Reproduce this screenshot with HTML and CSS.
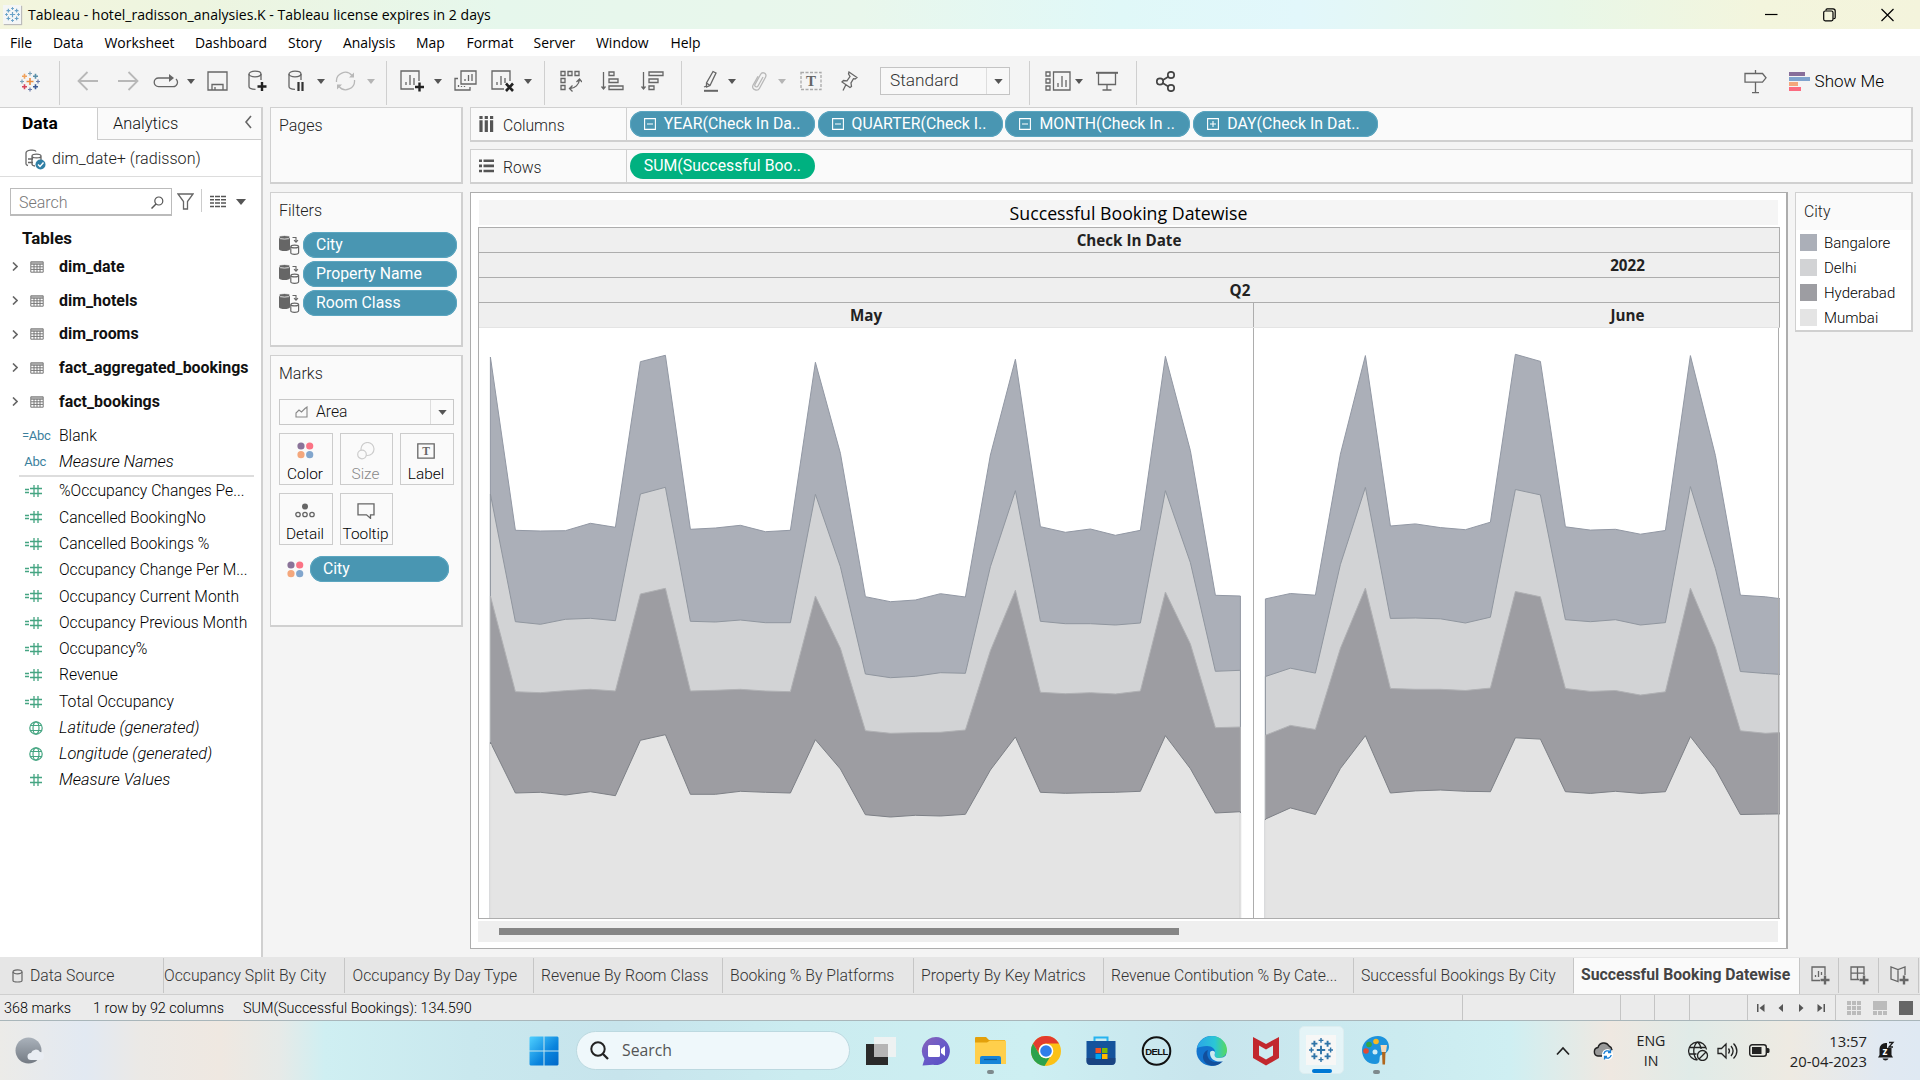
FILE: index.html
```html
<!DOCTYPE html>
<html lang="en">
<head>
<meta charset="utf-8">
<title>Tableau - hotel_radisson_analysies.K</title>
<link rel="stylesheet" href="styles.css">
</head>
<body>
<svg class="defs" width="0" height="0" aria-hidden="true">
  <symbol id="caret" viewBox="0 0 10 6"><path d="M0 0h10L5 6z"/></symbol>
  <symbol id="logo" viewBox="0 0 20 20">
    <g fill="none" stroke-width="1.6">
      <path class="c1" d="M10 6.5v7M6.5 10h7"/>
      <path class="c2" d="M4.5 2.2v5M2 4.7h5"/>
      <path class="c3" d="M15.5 2.2v5M13 4.7h5"/>
      <path class="c4" d="M4.5 12.8v5M2 15.3h5"/>
      <path class="c5" d="M15.5 12.8v5M13 15.3h5"/>
      <path class="c6" d="M10 0v4M8 2h4M2 8v4M0 10h4" stroke-width="1.2"/>
      <path class="c7" d="M10 16v4M8 18h4M18 8v4M16 10h4" stroke-width="1.2"/>
    </g>
  </symbol>
  <symbol id="table" viewBox="0 0 14 12"><path d="M.8.8h12.4v10.4H.8zM1 3.2h12M1 5.8h12M1 8.4h12M4 3v8M7 3v8M10 3v8M1 2h12" fill="none" stroke="#777" stroke-width="1"/></symbol>
  <symbol id="hash" viewBox="0 0 18 14"><path d="M0 5.5h4M0 8.5h4M5 4.5h12M5 9.5h12M9 1v12M13 1v12" fill="none" stroke="#45a582" stroke-width="1.3"/></symbol>
  <symbol id="hash1" viewBox="0 0 18 14"><path d="M5 4.5h12M5 9.5h12M9 1v12M13 1v12" fill="none" stroke="#45a582" stroke-width="1.3"/></symbol>
  <symbol id="globe" viewBox="0 0 14 14"><g fill="none" stroke="#45a582" stroke-width="1.2"><circle cx="7" cy="7" r="6.2"/><ellipse cx="7" cy="7" rx="3" ry="6.2"/><path d="M1.5 4.5h11M1.5 9.5h11"/></g></symbol>
  <symbol id="dbflow" viewBox="0 0 21 20">
    <path d="M0 2.2v12c0 2.4 11 2.4 11 0v-12z" fill="#666"/><ellipse cx="5.5" cy="2.3" rx="5.5" ry="1.8" fill="#666" stroke="#fafafa" stroke-width=".8"/>
    <path d="M11.8 11.8v6c0 2 7.8 2 7.8 0v-6" fill="#fafafa" stroke="#666" stroke-width="1.2"/><ellipse cx="15.7" cy="11.5" rx="3.9" ry="1.4" fill="#fafafa" stroke="#666" stroke-width="1.2"/>
    <path d="M13.5 2.5h3.5v4.5M15 5.2l2 2 2-2" fill="none" stroke="#666" stroke-width="1.1"/>
  </symbol>
  <symbol id="dots" viewBox="0 0 17 17"><circle cx="4" cy="4" r="3.6" fill="#8a7399"/><circle cx="12.7" cy="4" r="3.6" fill="#fb7385"/><circle cx="4" cy="12.7" r="3.6" fill="#f4a77c"/><circle cx="12.7" cy="12.7" r="3.6" fill="#82a6cd"/></symbol>
  <symbol id="minus" viewBox="0 0 12 12"><path d="M.6.6h10.8v10.8H.6zM3 6h6" fill="none" stroke="#fff" stroke-width="1.1"/></symbol>
  <symbol id="plus" viewBox="0 0 12 12"><path d="M.6.6h10.8v10.8H.6zM3 6h6M6 3v6" fill="none" stroke="#fff" stroke-width="1.1"/></symbol>
</svg>

<header class="titlebar">
  <span class="app-icon"><svg class="mono light" width="15" height="17"><use href="#logo"/></svg></span>
  <span class="title">Tableau - hotel_radisson_analysies.K - Tableau license expires in 2 days</span>
  <div class="window-buttons">
    <svg width="13" height="14" viewBox="0 0 13 14"><path d="M0 6.500h12.500" stroke="#000" stroke-width="1.2"/></svg>
    <svg width="13" height="14" viewBox="0 0 13 14"><path d="M3 2.600V2a1.200 1.200 0 0 1 1.200-1.200H10A2.200 2.200 0 0 1 12.200 3V9.500A1.200 1.200 0 0 1 11 10.700h-.6" fill="none" stroke="#000" stroke-width="1.2"/><rect x=".7" y="3" width="9.300" height="9.800" rx="1.500" fill="none" stroke="#000" stroke-width="1.2"/></svg>
    <svg width="13" height="14" viewBox="0 0 13 14"><path d="M.5 1l12 12M12.500 1l-12 12" stroke="#000" stroke-width="1.2"/></svg>
  </div>
</header>

<nav class="menubar"><span>File</span><span>Data</span><span>Worksheet</span><span>Dashboard</span><span>Story</span><span>Analysis</span><span>Map</span><span>Format</span><span>Server</span><span>Window</span><span>Help</span></nav>

<div class="toolbar">
  <div class="tools tools-home"><svg width="20" height="21"><use href="#logo"/></svg></div>
  <div class="tools tools-file">
    <svg width="22" height="20" viewBox="0 0 22 20" class="ln dim"><path d="M21 10H1.500M10.500 1L1.500 10l9 9" stroke-width="1.800"/></svg>
    <svg width="22" height="20" viewBox="0 0 22 20" class="ln dim"><path d="M1 10h19.500M11.500 1l9 9-9 9" stroke-width="1.800"/></svg>
    <svg width="26" height="16" viewBox="0 0 26 16" class="ln"><path d="M19 5H5.500a4.300 4.300 0 0 0 0 8.600h14.500a4.300 4.300 0 0 0 3-7.500"/><path d="M16 1l5 4-5 4z" fill="#666" stroke="none"/></svg>
    <svg width="8" height="5" class="caret"><use href="#caret"/></svg>
    <svg width="21" height="20" viewBox="0 0 21 20" class="ln"><path d="M1 1h19v18H1zM5 19v-5.500h11V19M8 19v-3"/></svg>
    <svg width="20" height="22" viewBox="0 0 20 22" class="ln"><ellipse cx="7" cy="4" rx="6" ry="2.800"/><path d="M1 4v12.500c0 1.800 3 2.800 6.500 2.800M13 4v6"/><path d="M14 12v9M9.500 16.500h9" stroke="#222" stroke-width="2.400"/></svg>
    <svg width="18" height="22" viewBox="0 0 18 22" class="ln"><ellipse cx="7" cy="4" rx="6" ry="2.800"/><path d="M1 4v12.500c0 1.800 2.500 2.800 6 2.800M13 4v6"/><path d="M10.500 12v9M14.500 12v9" stroke="#333" stroke-width="2.200"/></svg>
    <svg width="8" height="5" class="caret"><use href="#caret"/></svg>
    <svg width="21" height="20" viewBox="0 0 21 20" class="ln dim"><path d="M1.500 11a8.800 8.800 0 0 1 15.500-6.500M19.500 9a8.800 8.800 0 0 1-15.500 6.500"/><path d="M14 6.500h5V1.500zM7 13.500H2v5z" fill="#b8b8b8" stroke="none"/></svg>
    <svg width="8" height="5" class="caret dimmed"><use href="#caret"/></svg>
  </div>
  <div class="tools tools-sheet">
    <svg width="25" height="22" viewBox="0 0 25 22" class="ln"><path d="M19 11V1H1v18h13M6 15v-3M10 15V5M14 15V8"/><path d="M19.500 12.500v9M15 17h9" stroke="#222" stroke-width="2.400"/></svg>
    <svg width="8" height="5" class="caret"><use href="#caret"/></svg>
    <svg width="23" height="22" viewBox="0 0 23 22" class="ln"><path d="M7 1h15v13H7zM11 11V9M14.500 11V5M18 11V4M4 8.500H1V20h15v-3M4.500 17v-2M7.500 17v-1M10.500 17v-1"/></svg>
    <svg width="24" height="22" viewBox="0 0 24 22" class="ln"><path d="M19 11V1H1v18h12M6 15v-3M10 15V6M14 13V8"/><path d="M15 13.500l7 7.500M22 13.500l-7 7.500" stroke="#222" stroke-width="2.600"/></svg>
    <svg width="8" height="5" class="caret"><use href="#caret"/></svg>
  </div>
  <div class="tools tools-sort">
    <svg width="22" height="22" viewBox="0 0 22 22" class="ln"><path d="M1 1.500h4v4H1zM8 1.500h4v4H8zM15 1.500h4v4h-4zM1 8.500h4v4H1zM1 15.500h4v4H1zM10 18.500c5 0 9-4 9.500-9M12.500 15.500l-3 3 3 3M16.500 12l3-3 2.500 3"/></svg>
    <svg width="23" height="20" viewBox="0 0 23 20" class="ln"><path d="M2.500 1v17M.5 15.500l2 2.500 2-2.500M8 1h5v3.500H8zM8 8h9v3.500H8zM8 15h14v3.500H8z"/></svg>
    <svg width="23" height="20" viewBox="0 0 23 20" class="ln"><path d="M2.500 1v17M.5 15.500l2 2.500 2-2.500M8 1h14v3.500H8zM8 8h9v3.500H8zM8 15h5v3.500H8z"/></svg>
  </div>
  <div class="tools tools-format">
    <svg width="16" height="22" viewBox="0 0 16 22" class="ln"><path d="M10 1.500l3 1.500-6 12.500-3.500 1.500v-4zM3.500 13l3.500 2.500M1 17l2.500-1"/><path d="M1 20.800h14" stroke-width="2"/></svg>
    <svg width="8" height="5" class="caret"><use href="#caret"/></svg>
    <svg width="17" height="21" viewBox="0 0 17 21" class="ln dim"><path d="M12 6l-5 9c-1 2-4 .5-3-1.500l5.500-10c2-3.500 7-1 5 2.700l-6 11c-2 4-8.500 1-6.500-3l5-9"/></svg>
    <svg width="8" height="5" class="caret dimmed"><use href="#caret"/></svg>
    <svg width="22" height="20" viewBox="0 0 22 20" class="ln"><path d="M1 1.500h20v17H1z" stroke="#aaa" stroke-dasharray="3 1.500"/><text x="11" y="15" class="glyph-t">T</text></svg>
    <svg width="17" height="21" viewBox="0 0 17 21" class="ln"><path d="M8 1l8 5.500-2 1.500-1.500-.3-2.500 4.300.5 3.500-1.500 1L1 11l1.500-1.500 3.500.3L9 5.500 7.500 3zM5 13.500L2 19.500"/></svg>
    <div class="fit-select"><span>Standard</span><i><svg width="9" height="5" class="caret"><use href="#caret"/></svg></i></div>
  </div>
  <div class="tools tools-view">
    <svg width="26" height="20" viewBox="0 0 26 20" class="ln"><path d="M1 1h4v4H1zM1 8h4v4H1zM1 15h4v4H1zM8.500 1H25v18H8.500zM13 16v-4M17 16V5M21 16V9"/></svg>
    <svg width="8" height="5" class="caret"><use href="#caret"/></svg>
    <svg width="22" height="20" viewBox="0 0 22 20" class="ln"><path d="M0 1.800h22" stroke-width="2"/><path d="M2.500 2v11.500h17V2M11 13.500V19M6.500 19h9"/></svg>
  </div>
  <div class="tools tools-share">
    <svg width="20" height="21" viewBox="0 0 20 21" class="ln dark"><circle cx="4" cy="10.500" r="3.200"/><circle cx="15" cy="4" r="3.200"/><circle cx="15" cy="17" r="3.200"/><path d="M7 9l5.300-3.300M7 12.200l5.300 3.300"/></svg>
  </div>
  <div class="show-me">
    <svg width="23" height="24" viewBox="0 0 23 24" class="ln"><path d="M1 3.500h17.500l3.500 4.300-3.500 4.300H1zM11.500 0v3.500M11.500 12v10.500M8 22.700h7"/></svg>
    <svg width="21" height="20" viewBox="0 0 21 20"><path fill="#876e9a" d="M0 0h16v4H0z"/><path fill="#7fa3cd" d="M0 5h21v4H0z"/><path fill="#f4a77c" d="M0 10h9v4H0z"/><path fill="#fb6b80" d="M0 15h12v4H0z"/></svg>
    <span>Show Me</span>
  </div>
</div>

<main class="workspace">
  <aside class="data-pane">
    <div class="pane-tabs"><b>Data</b><span>Analytics<svg width="9" height="14" viewBox="0 0 9 14"><path d="M7 1L2 7l5 6" fill="none" stroke="#666" stroke-width="1.600"/></svg></span></div>
    <div class="source"><svg width="21" height="21" viewBox="0 0 21 21" class="ln"><path d="M3 16.500c-1.500-.3-2-1-2-1.500V4c0-3 9-4 10-1.500M7 7c0-2.500 9-2.500 9 0s-9 2.500-9 0v8c0 1 1 1.800 3 2M16 7v4M3 10h5M3 13.500h5"/><circle cx="15.500" cy="15.500" r="5" fill="#2f7fa5" stroke="none"/><path d="M13 15.500l2 2 3.500-4" stroke="#fff" stroke-width="1.400"/></svg><span>dim_date+ (radisson)</span></div>
    <div class="searchbar">
      <div class="search">Search<svg width="13" height="13" viewBox="0 0 13 13"><circle cx="7.800" cy="5" r="4" fill="none" stroke="#555" stroke-width="1.200"/><path d="M5 8l-4.500 4.500" stroke="#555" stroke-width="1.500"/></svg></div>
      <svg width="17" height="17" viewBox="0 0 17 17" class="ln"><path d="M1 1h15l-5.500 7.500V16H6.500V8.500z"/></svg>
      <i class="sep"></i>
      <svg width="16" height="13" viewBox="0 0 16 13"><path d="M0 1.500h16M0 4.800h16M0 8.100h16M0 11.400h16" stroke="#555" stroke-width="1.500" stroke-dasharray="4 1 5 1 5 0"/></svg>
      <svg width="10" height="6" class="caret"><use href="#caret"/></svg>
    </div>
    <h2>Tables</h2>
    <ul class="tables">
      <li><svg width="6" height="9" viewBox="0 0 6 9"><path d="M1 .5l4 4-4 4" class="chev"/></svg><svg width="14" height="12"><use href="#table"/></svg>dim_date</li>
      <li><svg width="6" height="9" viewBox="0 0 6 9"><path d="M1 .5l4 4-4 4" class="chev"/></svg><svg width="14" height="12"><use href="#table"/></svg>dim_hotels</li>
      <li><svg width="6" height="9" viewBox="0 0 6 9"><path d="M1 .5l4 4-4 4" class="chev"/></svg><svg width="14" height="12"><use href="#table"/></svg>dim_rooms</li>
      <li><svg width="6" height="9" viewBox="0 0 6 9"><path d="M1 .5l4 4-4 4" class="chev"/></svg><svg width="14" height="12"><use href="#table"/></svg>fact_aggregated_bookings</li>
      <li><svg width="6" height="9" viewBox="0 0 6 9"><path d="M1 .5l4 4-4 4" class="chev"/></svg><svg width="14" height="12"><use href="#table"/></svg>fact_bookings</li>
    </ul>
    <ul class="fields dims">
      <li><span class="abc">=Abc</span>Blank</li>
      <li><span class="abc">Abc</span><em>Measure Names</em></li>
    </ul>
    <ul class="fields measures">
      <li><svg width="18" height="14"><use href="#hash"/></svg>%Occupancy Changes Pe...</li>
      <li><svg width="18" height="14"><use href="#hash"/></svg>Cancelled BookingNo</li>
      <li><svg width="18" height="14"><use href="#hash"/></svg>Cancelled Bookings %</li>
      <li><svg width="18" height="14"><use href="#hash"/></svg>Occupancy Change Per M...</li>
      <li><svg width="18" height="14"><use href="#hash"/></svg>Occupancy Current Month</li>
      <li><svg width="18" height="14"><use href="#hash"/></svg>Occupancy Previous Month</li>
      <li><svg width="18" height="14"><use href="#hash"/></svg>Occupancy%</li>
      <li><svg width="18" height="14"><use href="#hash"/></svg>Revenue</li>
      <li><svg width="18" height="14"><use href="#hash"/></svg>Total Occupancy</li>
      <li><svg width="14" height="14"><use href="#globe"/></svg><em>Latitude (generated)</em></li>
      <li><svg width="14" height="14"><use href="#globe"/></svg><em>Longitude (generated)</em></li>
      <li><svg width="18" height="14"><use href="#hash1"/></svg><em>Measure Values</em></li>
    </ul>
  </aside>

  <section class="cards">
    <div class="card pages"><h3>Pages</h3></div>
    <div class="card filters"><h3>Filters</h3>
      <div class="filter"><svg width="21" height="20"><use href="#dbflow"/></svg><span class="pill">City</span></div>
      <div class="filter"><svg width="21" height="20"><use href="#dbflow"/></svg><span class="pill">Property Name</span></div>
      <div class="filter"><svg width="21" height="20"><use href="#dbflow"/></svg><span class="pill">Room Class</span></div>
    </div>
    <div class="card marks"><h3>Marks</h3>
      <div class="mark-type"><svg width="13" height="12" viewBox="0 0 13 12"><path d="M1 11V7l3-3 2.500 2L10 2.500l2-1.500v10z" fill="none" stroke="#888" stroke-width="1.100"/></svg><span>Area</span><i><svg width="9" height="5" class="caret"><use href="#caret"/></svg></i></div>
      <div class="shelf-buttons">
        <div><svg width="17" height="17"><use href="#dots"/></svg>Color</div>
        <div class="off"><svg width="18" height="18" viewBox="0 0 18 18"><g fill="none" stroke="#ccc" stroke-width="1.200"><circle cx="10.500" cy="7" r="6.500"/><circle cx="5" cy="12.500" r="4.300" fill="#fafafa"/></g></svg>Size</div>
        <div><svg width="18" height="16" viewBox="0 0 18 16" class="ln"><path d="M.8.8h16.400v14.400H.8z"/><text x="9" y="12" class="glyph-t small">T</text></svg>Label</div>
        <div><svg width="20" height="16" viewBox="0 0 20 16" class="ln"><circle cx="10" cy="3.500" r="3" fill="#666" stroke="none"/><circle cx="3" cy="11.500" r="2.200"/><circle cx="10" cy="11.500" r="2.200"/><circle cx="17" cy="11.500" r="2.200"/></svg>Detail</div>
        <div><svg width="18" height="16" viewBox="0 0 18 16" class="ln"><path d="M1 .8h16v11h-3.500v3.500L9.500 11.800H1z"/></svg>Tooltip</div>
      </div>
      <div class="encoding"><svg width="17" height="17"><use href="#dots"/></svg><span class="pill">City</span></div>
    </div>
  </section>

  <section class="canvas">
    <div class="shelf columns">
      <div class="shelf-name"><svg width="15" height="16" viewBox="0 0 15 16"><path d="M2 0v3M7.300 0v3M12.600 0v3M2 4.200V16M7.300 4.200V16M12.600 4.200V16" stroke="#555" stroke-width="3.200"/></svg><span>Columns</span></div>
      <span class="pill"><svg width="12" height="12"><use href="#minus"/></svg>YEAR(Check In Da..</span>
      <span class="pill"><svg width="12" height="12"><use href="#minus"/></svg>QUARTER(Check I..</span>
      <span class="pill"><svg width="12" height="12"><use href="#minus"/></svg>MONTH(Check In ..</span>
      <span class="pill"><svg width="12" height="12"><use href="#plus"/></svg>DAY(Check In Dat..</span>
    </div>
    <div class="shelf rows">
      <div class="shelf-name"><svg width="15" height="14" viewBox="0 0 15 14"><path d="M0 1.800h3M0 6.900h3M0 12h3M4.500 1.800H15M4.500 6.900H15M4.500 12H15" stroke="#555" stroke-width="2.600"/></svg><span>Rows</span></div>
      <span class="pill green">SUM(Successful Boo..</span>
    </div>
    <div class="view-row">
      <div class="sheet">
        <h1>Successful Booking Datewise</h1>
        <div class="viz">
          <div class="head">Check In Date</div>
          <div class="head year"><span>2022</span></div>
          <div class="head quarter"><span>Q2</span></div>
          <div class="head months"><span>May</span><span>June</span></div>
          <svg class="plot" width="1301" height="590" viewBox="479 328 1301 590">
            <g class="bangalore">
              <path d="M490.400 919V357L515.400 530.300 540.400 531 565.400 530.700 590.400 523.300 615.400 527.300 640.400 361.700 665.400 355.300 690.400 529.300 715.400 528 740.400 525.300 765.400 531.700 790.400 530.300 815.400 362.300 840.400 453.300 865.400 596.700 890.400 601.700 915.400 600 940.400 593.700 965.400 597 990.400 455 1015.400 359.300 1040.400 526.700 1065.400 532.300 1090.400 529 1115.400 535.300 1140.400 530.300 1165.400 356.300 1190.400 450.700 1215.400 595.300 1240.400 596V919z"/>
              <path d="M1265.400 919V598.900L1290.400 593.500 1315.400 595.200 1340.400 454.200 1365.400 355.600 1390.400 526 1415.400 523.900 1440.400 527.600 1465.400 529.700 1490.400 522.200 1515.400 354.300 1540.400 361.400 1565.400 526.800 1590.400 530.100 1615.400 529.300 1640.400 534.200 1665.400 530.500 1690.400 355.600 1715.400 455.500 1740.400 595.200 1765.400 596.800 1790.400 600V919z"/>
            </g>
            <g class="delhi">
              <path d="M490.400 919V494L515.400 621.700 540.400 624.300 565.400 619.300 590.400 618.300 615.400 620.700 640.400 494 665.400 487.300 690.400 621.300 715.400 622 740.400 620 765.400 622.700 790.400 622.700 815.400 494.300 840.400 566.700 865.400 674 890.400 677.700 915.400 676.300 940.400 672.700 965.400 673.300 990.400 566.700 1015.400 490.700 1040.400 621.300 1065.400 623.700 1090.400 623.700 1115.400 625 1140.400 623 1165.400 490.700 1190.400 562.700 1215.400 671.300 1240.400 670.300V919z"/>
              <path d="M1265.400 919V676.500L1290.400 668.200 1315.400 673.100 1340.400 564.500 1365.400 487.400 1390.400 618.400 1415.400 618 1440.400 618.800 1465.400 623 1490.400 617.200 1515.400 489.500 1540.400 494.900 1565.400 619.700 1590.400 621.700 1615.400 619.700 1640.400 625 1665.400 622.600 1690.400 486.600 1715.400 568.700 1740.400 671.500 1765.400 673.500 1790.400 675V919z"/>
            </g>
            <g class="hyderabad">
              <path d="M490.400 919V596L515.400 691.700 540.400 692.700 565.400 690.700 590.400 689.300 615.400 691 640.400 594 665.400 588.300 690.400 691 715.400 690.300 740.400 689.300 765.400 691 790.400 691.700 815.400 596 840.400 648.300 865.400 730.700 890.400 733.300 915.400 732.700 940.400 732.300 965.400 730 990.400 650.700 1015.400 590.300 1040.400 692.300 1065.400 693.700 1090.400 692.700 1115.400 694 1140.400 691 1165.400 592 1190.400 644 1215.400 727.700 1240.400 727V919z"/>
              <path d="M1265.400 919V735.300L1290.400 725.400 1315.400 729.500 1340.400 648.300 1365.400 588.100 1390.400 688.500 1415.400 689.300 1440.400 689.300 1465.400 690.500 1490.400 688.100 1515.400 591.500 1540.400 596.800 1565.400 688.500 1590.400 691.400 1615.400 690.500 1640.400 695.100 1665.400 691.800 1690.400 588.100 1715.400 647.400 1740.400 730.800 1765.400 733.300 1790.400 732V919z"/>
            </g>
            <g class="mumbai">
              <path d="M490.400 919V742.300L515.400 793 540.400 792.300 565.400 795 590.400 791.700 615.400 795.700 640.400 740.300 665.400 734.700 690.400 794.300 715.400 794.300 740.400 791.300 765.400 792.300 790.400 793 815.400 739.700 840.400 769 865.400 814.700 890.400 817 915.400 815.300 940.400 816 965.400 814.300 990.400 770 1015.400 737 1040.400 792.300 1065.400 793.300 1090.400 792.700 1115.400 792.300 1140.400 791.300 1165.400 735.700 1190.400 768.700 1215.400 813 1240.400 811.700V919z"/>
              <path d="M1265.400 919V819.100L1290.400 807.900 1315.400 814.500 1340.400 768.500 1365.400 735.700 1390.400 793 1415.400 790.900 1440.400 790 1465.400 791.300 1490.400 791.700 1515.400 737.800 1540.400 739.100 1565.400 791.700 1590.400 793.400 1615.400 791.300 1640.400 793.400 1665.400 791.700 1690.400 736.600 1715.400 768.900 1740.400 814.500 1765.400 814.100 1790.400 813.700V919z"/>
              <path class="edge" d="M490.500 744V919M1240.500 813V919M1265.500 820V919"/>
            </g>
            <path d="M1253.500 328v591M1778.500 328v591" stroke="#adadad"/>
          </svg>
        </div>
        <div class="scroll-track"><div class="scroll-thumb"></div></div>
      </div>
      <div class="legend">
        <h3>City</h3>
        <ul><li class="bangalore-key"><i></i>Bangalore</li><li class="delhi-key"><i></i>Delhi</li><li class="hyderabad-key"><i></i>Hyderabad</li><li class="mumbai-key"><i></i>Mumbai</li></ul>
      </div>
    </div>
  </section>
</main>

<nav class="sheet-tabs">
  <span class="ds"><svg width="11" height="14" viewBox="0 0 11 14"><path d="M1 3v8.500c0 2 9 2 9 0V3" fill="none" stroke="#666" stroke-width="1.200"/><ellipse cx="5.500" cy="2.800" rx="4.500" ry="2" fill="none" stroke="#666" stroke-width="1.200"/></svg>Data Source</span>
  <span class="cut">Occupancy Split By City</span>
  <span>Occupancy By Day Type</span>
  <span>Revenue By Room Class</span>
  <span>Booking % By Platforms</span>
  <span>Property By Key Matrics</span>
  <span>Revenue Contibution % By Cate...</span>
  <span>Successful Bookings By City</span>
  <span class="active">Successful Booking Datewise</span>
  <span class="new"><svg width="19" height="19" viewBox="0 0 19 19" class="ln"><path d="M14 9V1H1v13.500h8M4.500 11V9M7.500 11V5M10.500 9V6"/><path d="M14 9.500v9M9.500 14h9" stroke-width="2.400"/></svg></span>
  <span class="new"><svg width="19" height="19" viewBox="0 0 19 19" class="ln"><path d="M14 9V1H1v12.500h8M7.500 1v12.500M1 7.200h13"/><path d="M14 9.500v9M9.500 14h9" stroke-width="2.400"/></svg></span>
  <span class="new"><svg width="19" height="19" viewBox="0 0 19 19" class="ln"><path d="M15 9V1l-7 2.500L1 1v12l7 2.500V3.500"/><path d="M14 9.500v9M9.500 14h9" stroke-width="2.400"/></svg></span>
</nav>

<footer class="status">
  <span>368 marks</span><span>1 row by 92 columns</span><span>SUM(Successful Bookings): 134.590</span>
  <i class="cell"></i><i class="cell"></i><i class="cell"></i><i class="cell"></i>
  <div class="cell pager">
    <svg width="8" height="8" viewBox="0 0 8 8"><path d="M0 0h1.500v8H0zM7.500 0v8L2.500 4z"/></svg>
    <svg width="8" height="8" viewBox="0 0 8 8"><path d="M6 0v8L1.500 4z"/></svg>
    <svg width="8" height="8" viewBox="0 0 8 8"><path d="M2 0v8L6.500 4z"/></svg>
    <svg width="8" height="8" viewBox="0 0 8 8"><path d="M8 0H6.500v8H8zM.5 0v8l5-4z"/></svg>
  </div>
  <div class="cell layouts">
    <svg width="14" height="14" viewBox="0 0 14 14"><path fill="#bbb" d="M0 0h4v4H0zM5 0h4v4H5zM10 0h4v4h-4zM0 5h4v4H0zM5 5h4v4H5zM10 5h4v4h-4zM0 10h4v4H0zM5 10h4v4H5zM10 10h4v4h-4z"/></svg>
    <svg width="14" height="14" viewBox="0 0 14 14"><path fill="#bbb" d="M0 0h14v9H0zM0 10h4v4H0zM5 10h4v4H5zM10 10h4v4h-4z"/></svg>
    <svg width="14" height="14" viewBox="0 0 14 14"><path fill="#666" d="M0 0h14v14H0z"/></svg>
  </div>
</footer>

<footer class="taskbar">
  <svg class="weather" width="30" height="28" viewBox="0 0 30 28"><defs><linearGradient id="gw" x2="0" y2="1"><stop stop-color="#aab2bb"/><stop offset="1" stop-color="#747b84"/></linearGradient></defs><circle cx="13.500" cy="13.500" r="13" fill="url(#gw)"/><path d="M16 23a3.500 3.500 0 0 1 0-7 5 5 0 0 1 9-1 4 4 0 0 1 0 8z" fill="#e9edf3"/></svg>
  <svg class="start" width="30" height="30" viewBox="0 0 30 30"><defs><linearGradient id="gs" x2="1" y2="1"><stop stop-color="#4fd0ff"/><stop offset=".6" stop-color="#0a84dd"/><stop offset="1" stop-color="#0067c8"/></linearGradient></defs><path fill="url(#gs)" d="M1.500.5h13v14H.5v-13zM15.500.5h13l1 1v13h-14zM.5 15.500h14v14h-13l-1-1zM15.500 15.500h14v13l-1 1h-13z"/></svg>
  <div class="tb-search"><svg width="19" height="19" viewBox="0 0 19 19"><circle cx="8" cy="8" r="6.700" fill="none" stroke="#222" stroke-width="2"/><path d="M13 13l5 5" stroke="#222" stroke-width="2.300"/></svg>Search</div>
  <div class="apps">
    <div><svg width="30" height="30" viewBox="0 0 30 30"><path d="M0 8h22v21H0z" fill="#2a2a2a"/><path d="M8 1h22v20H8z" fill="#f2f2f2" fill-opacity=".9"/><path d="M8 8h14v13H8z" fill="#b5b5b5"/></svg></div>
    <div><svg width="30" height="30" viewBox="0 0 30 30"><defs><linearGradient id="gc" x2=".8" y2="1"><stop stop-color="#8b63b8"/><stop offset=".5" stop-color="#6a5bc8"/><stop offset="1" stop-color="#5a50c4"/></linearGradient></defs><path d="M15 1a14 14 0 1 1-3 27.700L1.500 29.500 3.500 23A14 14 0 0 1 15 1z" fill="url(#gc)"/><rect x="7" y="9" width="12" height="12" rx="1.500" fill="#fff"/><path d="M20 13l4-3v10l-4-3z" fill="#fff"/></svg></div>
    <div class="run"><svg width="31" height="30" viewBox="0 0 31 30"><path d="M0 2a1 1 0 0 1 1-1h10l3 3h16v8H0z" fill="#e3a00b"/><path d="M0 6.500h12l3-2h15a1 1 0 0 1 1 1V28H0z" fill="#ffcf4b"/><path d="M5 28v-6a2 2 0 0 1 2-2h17a2 2 0 0 1 2 2v6z" fill="#1684d8"/><path d="M9 23.500h13" stroke="#0b5a9d" stroke-width="1.200"/></svg></div>
    <div><svg width="30" height="30" viewBox="0 0 30 30"><circle cx="15" cy="15" r="15" fill="#fbc116"/><path d="M2 7.500A15 15 0 0 1 28 7.500H15a7.500 7.500 0 0 0-6.500 11z" fill="#e33b2e"/><path d="M2 7.500l6.500 11A7.500 7.500 0 0 0 19 21L13.500 30A15 15 0 0 1 2 7.500z" fill="#2ba24c"/><circle cx="15" cy="15" r="7.300" fill="#fff"/><circle cx="15" cy="15" r="5.800" fill="#2f7de9"/></svg></div>
    <div><svg width="30" height="30" viewBox="0 0 30 30"><path d="M8.500 6V1.500h13V6" fill="none" stroke="#27b4f0" stroke-width="2"/><path d="M.5 5h29v20a4 4 0 0 1-4 4h-21a4 4 0 0 1-4-4z" fill="#14539c"/><path d="M.5 22h29v3a4 4 0 0 1-4 4h-21a4 4 0 0 1-4-4z" fill="#1c3f78" opacity=".7"/><path fill="#f25022" d="M9.500 12H15v5H9.500z"/><path fill="#7fba00" d="M16 12h5.500v5H16z"/><path fill="#00a4ef" d="M9.500 18H15v5H9.500z"/><path fill="#ffb900" d="M16 18h5.500v5H16z"/></svg></div>
    <div><svg width="31" height="30" viewBox="0 0 31 30"><circle cx="15.500" cy="15" r="13.800" fill="none" stroke="#111" stroke-width="2"/><text x="15.500" y="18.500" class="dell">DELL</text></svg></div>
    <div><svg width="31" height="30" viewBox="0 0 31 30"><defs><linearGradient id="ge" x2="1"><stop stop-color="#2ba5e8"/><stop offset=".6" stop-color="#2bc6d6"/><stop offset="1" stop-color="#58d95c"/></linearGradient></defs><circle cx="15.500" cy="15" r="15" fill="#1374ce"/><path d="M1 12C3 4 9 0 16 0c9 0 15 7 15 14 0 5-4 8-8 8-5 0-5-2-4-4 1-5-3-8-8-8-4 0-8 1-10 2z" fill="url(#ge)"/><path d="M12 14c-3 7 3 15 15 11-4 5-11 6-16 3-6-4-5-12 1-14z" fill="#124f9c"/><path d="M14 17c0-3 5-3 5 0-1 3 0 5 4 5 3 0 6-1 8-4v4l-3 3c-7 2-14-1-14-8z" fill="#cdeaf0"/></svg></div>
    <div><svg width="28" height="30" viewBox="0 0 28 30"><path d="M1 1l13 7 13-7v21l-13 7.500L1 22z" fill="#c2272d"/><path d="M7 9.500l7 4 7-4v10l-7 4-7-4z" fill="#cdebf0"/></svg></div>
    <div class="run focus"><svg width="30" height="30" viewBox="0 0 30 30" class="mono"><path d="M0 0h30v30H0z" fill="#f7f7f6"/><use href="#logo" x="3" y="3" width="24" height="24"/></svg></div>
    <div class="run"><svg width="30" height="31" viewBox="0 0 30 31"><path d="M17 1c7 0 11 5 11 11 0 7-8 7-9 9-1 3 1 8-5 8-8 0-13-6-13-14C1 7 9 1 17 1z" fill="#1d93dc"/><circle cx="15" cy="6.500" r="2.800" fill="#f5b921"/><circle cx="8" cy="9.500" r="2.800" fill="#35a544"/><circle cx="5" cy="16" r="2.800" fill="#e24a32"/><circle cx="14" cy="17" r="2.500" fill="#cdebf5"/><path d="M19.500 10h6.500l-1 7h-4.500z" fill="#f4d9b8"/><path d="M21 17h3.500l-.5 12.500h-2.500z" fill="#b0671d"/></svg></div>
  </div>
  <div class="tray">
    <svg width="14" height="10" viewBox="0 0 14 10"><path d="M1 8.500l6-6.500 6 6.500" fill="none" stroke="#222" stroke-width="1.700"/></svg>
    <svg width="21" height="18" viewBox="0 0 21 18"><path d="M9 14H5a4.300 4.300 0 0 1 0-8.500 6 6 0 0 1 11-1.500 5 5 0 0 1 3 6z" fill="#999"/><path d="M9 14H5a4.300 4.300 0 0 1 0-8.500 6 6 0 0 1 11-1.500 5 5 0 0 1 3 4" fill="none" stroke="#222" stroke-width="1.400"/><circle cx="14.500" cy="12.500" r="5.500" fill="#fff"/><path d="M10.800 12a3.800 3.800 0 0 1 6.500-2M18.200 13a3.800 3.800 0 0 1-6.500 2M17.500 7.500v3H15M11.500 17.500v-3H14" fill="none" stroke="#1a7fd4" stroke-width="1.300"/></svg>
    <span class="lang">ENG<br>IN</span>
    <svg width="21" height="20" viewBox="0 0 21 20"><g fill="none" stroke="#222" stroke-width="1.300"><path d="M18.500 8.500A9 9 0 1 0 9.500 19M1.500 6.500h16M1.500 13h7M9.500 1c-5 4-5 14 0 18M9.500 1c2 1.500 3.300 4 3.600 7"/><circle cx="14.500" cy="14.500" r="5"/><path d="M11 18l7-7"/></g></svg>
    <svg width="21" height="18" viewBox="0 0 21 18"><g fill="none" stroke="#222" stroke-width="1.300"><path d="M1 6.500h3.500L9 2v14l-4.500-4.500H1zM11.500 6.500c1.200 1.500 1.200 3.500 0 5M14 4c2.500 3 2.500 7 0 10M16.500 1.500c4.500 4.500 4.500 10.500 0 15"/></g></svg>
    <svg width="21" height="13" viewBox="0 0 21 13"><rect x=".7" y=".7" width="16.600" height="11.600" rx="2.500" fill="none" stroke="#222" stroke-width="1.400"/><path d="M3 3h9.500v7H3z" fill="#222"/><path d="M18 4h1a1.500 1.500 0 0 1 1.500 1.500v2A1.500 1.500 0 0 1 19 9h-1z" fill="#222"/></svg>
    <span class="clock">13:57<br>20-04-2023</span>
    <svg width="18" height="20" viewBox="0 0 18 20"><path d="M1 16.500L2.500 14V8a6 6 0 0 1 6-6h1.500v5h4.500v7l1.500 2.500zM5.500 17.500h6c-1 2.500-5 2.500-6 0z" fill="#1a1a1a"/><text x="8" y="13.500" class="zz">z</text><path d="M12 1.500h4l-4 4.500h4" fill="none" stroke="#1a1a1a" stroke-width="1.300"/></svg>
  </div>
</footer>
</body>
</html>
```
FILE: styles.css
```css
* { box-sizing: border-box; }
body { margin: 0; width: 1920px; height: 1080px; overflow: hidden; display: flex; flex-direction: column; background: #f4f4f4; color: #1a1a1a; font: 300 15.7px/1 Roboto, "Open Sans", sans-serif; }
h1, h2, h3, ul { margin: 0; padding: 0; font-weight: inherit; list-style: none; }
svg { display: block; flex: none; }
.defs { position: absolute; }
i { font-style: normal; }

/* logo colours, overridden by --mark where the mark is drawn in one colour */
#logo .c1 { stroke: var(--mark, #eb8a3c); }
#logo .c2 { stroke: var(--mark, #f0a25c); }
#logo .c3 { stroke: var(--mark, #5a8fa8); }
#logo .c4 { stroke: var(--mark, #d8455c); }
#logo .c5 { stroke: var(--mark, #3d5a96); }
#logo .c6 { stroke: var(--mark, #7aa0b8); }
#logo .c7 { stroke: var(--mark, #6b7aa8); }
.mono { --mark: #2f74a8; }
.mono.light { --mark: #6aa3c8; }

/* title bar */
.titlebar { flex: 0 0 29px; display: flex; align-items: center; background: linear-gradient(90deg, #f3f5dd 0, #edf5e0 200px, #e6f7ec 500px, #e9f7ec 860px, #e0f8f8 1120px, #e2f7fb 1300px, #e8f7e8 1560px, #f3f5dd 1760px, #f4f4dc 100%); font: 400 14.06px/1 "Open Sans", "Noto Sans", sans-serif; color: #000; }
.title { padding-top: 1px; }
.app-icon { width: 18px; height: 19px; margin: 0 7px 0 3px; display: grid; place-items: center; background: #f4f6f6; box-shadow: 1px 1px 1px #bbb; }
.window-buttons { margin-left: auto; width: 129px; margin-right: 26px; display: flex; justify-content: space-between; }
.menubar { flex: 0 0 27px; background: #fff; display: grid; grid-template-columns: 43px 51.500px 90.500px 93px 55px 73px 50.500px 67px 62.500px 74.500px auto; align-items: center; padding: 1px 0 0 10px; font: 400 13.95px/1 "Open Sans", "Noto Sans", sans-serif; color: #000; }

/* toolbar */
.toolbar { flex: 0 0 51px; display: flex; padding-top: 5px; align-items: flex-start; }
.tools { height: 44px; display: grid; align-items: center; border-right: 1px solid #cfcfcf; padding-bottom: 4px; }
.tools-home { width: 60px; padding-left: 20px; }
.tools-file { width: 327px; padding-left: 17px; grid-template-columns: 40px 36px 34px 20px 41px 40px 29px 18px 32px auto; }
.tools-sheet { width: 158px; padding-left: 13px; grid-template-columns: 34px 20px 37px 33px auto; }
.tools-sort { width: 137px; padding-left: 15px; grid-template-columns: 41px 40px auto; }
.tools-format { width: 348px; padding-left: 21px; grid-template-columns: 25px 23px 27px 22px 41px 39px auto; }
.tools-view { width: 107px; padding-left: 15px; grid-template-columns: 30px 21px auto; }
.tools-share { border: 0; padding-left: 19px; }
.ln { fill: none; stroke: #666; stroke-width: 1.3; }
.ln.dim { stroke: #b8b8b8; }
.ln.dark { stroke: #444; stroke-width: 1.700; }
.caret { fill: #555; }
.caret.dimmed { fill: #b5b5b5; }
.glyph-t { font: bold 15px "Liberation Serif", serif; text-anchor: middle; fill: #666; stroke: none; }
.glyph-t.small { font-size: 11.5px; }
.fit-select { width: 130px; height: 28px; border: 1px solid #c4c4c4; background: #f8f8f8; display: flex; align-items: center; font-size: 17.300px; color: #333; padding-left: 9px; }
.fit-select span { flex: 1; }
.fit-select i { width: 23px; align-self: stretch; border-left: 1px solid #ddd; display: grid; place-items: center; }
.show-me { margin-left: auto; margin-right: 36px; height: 41px; display: flex; align-items: center; font-size: 17px; color: #000; }
.show-me svg + svg { margin: 0 5px 0 22px; }

/* data pane */
.workspace { flex: 0 0 850px; display: flex; }
.data-pane { width: 263px; background: #fff; border-right: 2px solid #d0d0d0; border-top: 1px solid #d0d0d0; }
.pane-tabs { height: 32px; display: flex; font-size: 16.4px; }
.pane-tabs b { width: 97px; padding: 7px 0 0 22px; font-weight: 700; font-size: 17.400px; color: #000; }
.pane-tabs span { flex: 1; display: flex; justify-content: space-between; padding: 8px 8px 0 15px; background: #fafafa; border-left: 1px solid #ccc; border-bottom: 1px solid #ccc; color: #111; }
.pane-tabs svg { margin-top: -1px; }
.source { height: 37px; display: flex; align-items: center; gap: 6px; padding: 2px 0 0 25px; border-bottom: 1px solid #ddd; color: #222; font-size: 16.100px; }
.searchbar { display: flex; align-items: center; height: 28px; margin: 11px 0 0 10px; }
.search { width: 162px; height: 28px; border: 1px solid #bbb; border-bottom-width: 2px; display: flex; align-items: center; justify-content: space-between; padding: 2px 7px 0 8px; color: #777; font-size: 16px; }
.searchbar .ln { margin: 0 7px 1px 5px; }
.sep { width: 1px; height: 23px; background: #ccc; margin: 0 8px 4px 0; }
.searchbar .sep + svg { margin: 0 10px 2px 0; }
.data-pane h2 { font-weight: 700; font-size: 16.900px; color: #111; padding: 14px 0 0 22px; height: 34px; }
.tables { font-weight: 700; color: #111; font-size: 15.930px; }
.tables li { height: 33.700px; display: grid; grid-template-columns: 18px 29px auto; align-items: center; padding-left: 12px; }
.chev { fill: none; stroke: #666; stroke-width: 1.600; }
.fields li { height: 26.3px; display: grid; grid-template-columns: 36px auto; align-items: center; padding-left: 23px; white-space: nowrap; color: #000; }
.fields li svg { margin-left: 2px; }
.fields li svg[width="14"] { margin-left: 6px; }
.abc { color: #3b7f9d; font-size: 13px; font-weight: 400; width: 24px; text-align: right; margin-left: -1px; letter-spacing: -.3px; }
.dims { margin: 4px 7px 0 19px; border-bottom: 2px solid #ddd; }
.dims li { padding-left: 4px; }
.measures { padding-top: 1px; }
em { font-style: italic; font-size: 16.400px; }

/* cards */
.cards { width: 200px; margin-left: 7px; display: flex; flex-direction: column; gap: 8px; color: #222; }
.card { width: 193px; border: 1px solid #d0d0d0; border-right-width: 2px; border-bottom-width: 2px; background: #fafafa; padding: 10px 0 0 8px; }
.card h3 { font-size: 16px; line-height: 16px; }
.pages { height: 77px; }
.filters { height: 155px; }
.filters h3 { margin-bottom: 11px; }
.marks { height: 272px; }
.filter { display: flex; align-items: center; gap: 3px; height: 29px; }
.pill { height: 26px; border-radius: 13px; background: #4996b2; color: #fff; display: flex; align-items: center; font-size: 15.800px; font-weight: 400; white-space: nowrap; box-shadow: inset 0 0 0 1px #5ca6c0; }
.filter .pill { width: 153.500px; padding-left: 13px; }
.marks h3 { margin-bottom: 17px; }
.mark-type { width: 175px; height: 26px; border: 1px solid #c8c8c8; display: flex; align-items: center; padding-left: 15px; gap: 8px; color: #111; }
.mark-type span { flex: 1; }
.mark-type i { width: 23px; align-self: stretch; border-left: 1px solid #ddd; display: grid; place-items: center; }
.shelf-buttons { display: grid; grid-template-columns: 54px 53px 54px; gap: 8px 7px; margin-top: 8px; color: #000; }
.shelf-buttons > div { height: 52px; border: 1px solid #ccc; display: grid; grid-template-rows: 33px auto; place-items: start center; font-size: 15.400px; padding-right: 2px; white-space: nowrap; }
.shelf-buttons svg { align-self: center; }
.shelf-buttons .off { color: #888; }
.encoding { display: flex; align-items: center; gap: 6px; margin: 11px 0 0 8px; }
.encoding .pill { width: 139px; padding-left: 13px; }

/* shelves and sheet */
.canvas { width: 1443px; display: flex; flex-direction: column; }
.shelf { height: 35px; width: 1443px; background: #fafafa; border: 1px solid #d0d0d0; border-right-width: 2px; border-bottom-width: 2px; display: flex; align-items: center; gap: 2.800px; margin-bottom: 7px; }
.shelf-name { width: 156px; height: 100%; border-right: 1px solid #d0d0d0; display: flex; align-items: center; gap: 9px; padding-left: 8px; color: #222; }
.shelf-name span { padding-top: 3px; }
.shelf .pill { width: 185px; gap: 8px; padding-left: 14px; letter-spacing: .05px; }
.shelf .pill.green { background: #00b180; box-shadow: none; }
.rows { margin-bottom: 8px; }
.view-row { display: flex; gap: 7px; align-items: flex-start; }
.sheet { width: 1318px; height: 757px; background: #fff; border: 1px solid #adadad; border-right-width: 2px; padding: 7px 8px 0 8px; }
.sheet h1 { height: 25px; margin-bottom: 2px; background: #f5f5f5; text-align: center; font: 400 17.76px/27px "Open Sans", "Noto Sans", sans-serif; color: #000; }
.viz { border: 1px solid #adadad; border-width: 1px 0 1px 1px; margin-left: -1px; width: 1302px; }
.head { height: 25px; background: #efefef; border-right: 1px solid #adadad; border-bottom: 1px solid #adadad; font: 700 15.200px/24px "Open Sans", "Noto Sans", sans-serif; text-align: center; color: #222; }
.year { padding-left: 997px; }
.quarter { padding-left: 222px; }
.months { display: grid; grid-template-columns: 775px 1fr; border-bottom-color: #e4e4e4; }
.months span { border-right: 1px solid #adadad; }
.months span + span { padding-left: 222px; border: 0; }
.plot path { stroke-width: 1; }
.bangalore { fill: #abafb8; stroke: #9298a4; }
.delhi { fill: #d2d3d5; stroke: #90969f; }
.hyderabad { fill: #9d9da2; stroke: #b0b1b4; }
.mumbai { fill: #e4e4e4; stroke: #7d8086; }
.plot .edge { stroke: #e0e0e0; stroke-width: 1.600; }
.scroll-track { height: 21px; margin: 2px 0 0 -1px; background: #efefef; padding: 7px 0 0 21px; }
.scroll-thumb { width: 680px; height: 7px; background: #868686; }
.legend { width: 118px; height: 140px; background: #fff; border: 1px solid #d0d0d0; border-right-width: 2px; border-bottom-width: 2px; }
.legend h3 { height: 37px; padding: 11px 0 0 8px; background: #fafafa; color: #222; font-size: 15.8px; }
.legend li { height: 25px; display: flex; align-items: center; gap: 7px; padding: 1px 0 0 4px; font-size: 15px; color: #000; }
.legend i { width: 17px; height: 17px; margin-top: -2px; }
.bangalore-key i { background: #abafb8; }
.delhi-key i { background: #d2d3d5; }
.hyderabad-key i { background: #9d9da2; }
.mumbai-key i { background: #e4e4e4; }

/* sheet tabs and status bar */
.sheet-tabs { flex: 0 0 38px; background: #e6e6e6; border-bottom: 1px solid #cfcfcf; display: grid; grid-template-columns: 164px 181px 188.500px 189px 191px 190px 250px 220px 226.500px 39px 40px 40px; color: #333; font-size: 15.75px; padding-top: 1px; }
.sheet-tabs span { display: flex; align-items: center; padding-left: 7.500px; border-right: 1px solid #c6c6c6; white-space: nowrap; margin-bottom: 1px; }
.sheet-tabs .cut { padding-left: 0; }
.sheet-tabs .ds { padding-left: 12px; gap: 7px; }
.sheet-tabs .active { background: #fafafa; font-weight: 700; color: #444; margin-bottom: 0; padding-bottom: 3px; }
.sheet-tabs .new { padding-left: 11px; }
.status { flex: 0 0 26px; min-height: 0; background: #ebebeb; border-bottom: 1px solid #a9b6ba; display: grid; grid-template-columns: 89px 150px 1219px 158px 34px 35px 58px 88px auto; grid-template-rows: 25px; padding-left: 4px; font-size: 14.4px; color: #000; line-height: 27px; }
.cell { border-left: 1px solid #c4c4c4; }
.pager { display: flex; align-items: center; gap: 12px; padding-left: 9px; fill: #555; }
.layouts { display: flex; align-items: center; gap: 12px; padding-left: 11px; }

/* taskbar */
.taskbar { flex: 0 0 60px; display: flex; align-items: center; padding-bottom: 1px; background: linear-gradient(90deg, #ecebe8 0, #e2e9f2 85px, #ebe9e6 140px, #efe8e1 220px, #e6eae8 280px, #cfeff2 325px, #c9e8ee 470px, #c7e4ec 620px, #cbecf0 800px, #cdeff2 1030px, #c8e5ed 1200px, #cbebf0 1400px, #cfeff2 1510px, #efe8e1 1610px, #e0ebe8 1690px, #eeeae2 1790px, #e1e9f2 1880px, #dfe9f3 100%); color: #222; font-family: "Open Sans", "Noto Sans", sans-serif; font-weight: 400; }
.weather { margin: 0 484px 0 15px; }
.tb-search { width: 274px; height: 39px; margin-left: 17px; border-radius: 20px; background: #eff8fb; border: 1px solid #bcd9e0; display: flex; align-items: center; gap: 13px; padding-left: 13px; font-size: 15.8px; color: #555; }
.apps { display: grid; grid-template-columns: repeat(10, 55.100px); margin-left: 3px; height: 59px; }
.apps div { display: grid; place-items: center; position: relative; }
.apps .run::after { content: ""; position: absolute; bottom: 6px; left: 24px; width: 7px; height: 4px; border-radius: 2px; background: #7e8a8d; }
.apps .focus { margin: 5px 5px 6px; background: rgba(255,255,255,.5); border: 1px solid #dcedf0; border-radius: 5px; }
.apps .focus::after { left: 12px; bottom: 0; width: 20px; background: #0078d4; }
.dell { font: 700 9.500px "Liberation Sans", Arial, sans-serif; text-anchor: middle; letter-spacing: -.6px; fill: #111; }
.tray { margin-left: auto; margin-right: 24px; display: grid; grid-template-columns: 37px 43px 52px 29px 32px 40px 78px 29px; align-items: center; font-size: 14.8px; line-height: 20px; }
.tray .lang { width: 30px; text-align: center; white-space: nowrap; font-size: 14.2px; }
.clock { text-align: right; white-space: nowrap; }
.tray > svg:last-child { margin-left: 10px; }
.zz { font: 700 10px "Open Sans", sans-serif; fill: #fff; text-anchor: middle; }
```
